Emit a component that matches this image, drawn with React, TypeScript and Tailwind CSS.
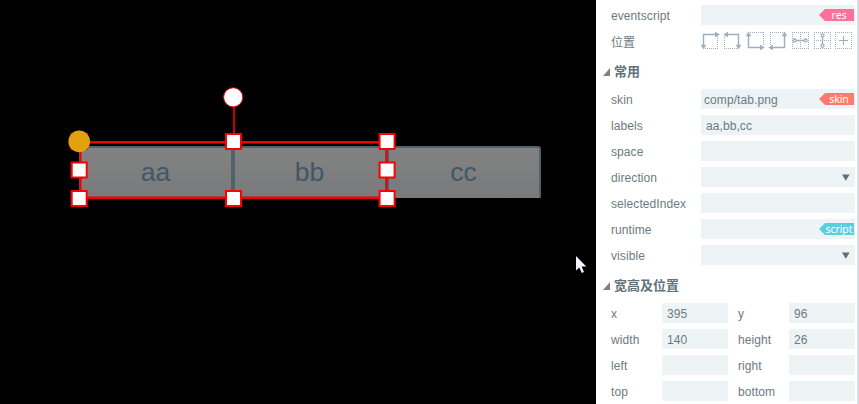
import React from "react";

const FONT = "font-['Liberation_Sans','Noto_Sans_CJK_SC',sans-serif]";

function Tag({ text, color }: { text: string; color: string }) {
  return (
    <span className="relative mr-px ml-auto flex h-3 w-[35px] items-center">
      <svg className="absolute inset-0" width="35" height="12" viewBox="0 0 35 12">
        <path d="M0 6 L6 0 H35 V12 H6 Z" fill={color} />
      </svg>
      <span className="relative w-full pl-[5px] text-center font-['Noto_Sans',sans-serif] text-[10.5px] leading-3 tracking-[-0.1px] text-white">
        {text}
      </span>
    </span>
  );
}

function Caret() {
  return (
    <svg className="mr-[5px] ml-auto" width="8" height="7" viewBox="0 0 8 7">
      <path d="M0 0.5 H7.6 L3.8 6.8 Z" fill="#5f7078" />
    </svg>
  );
}

function Row({ label, children }: { label: string; children?: React.ReactNode }) {
  return (
    <div className="flex h-[26px] items-center pl-[15px]">
      <span className="w-[90px] shrink-0 pt-px">{label}</span>
      <div className="flex h-5 w-[154px] items-center bg-[#eef3f6]">{children}</div>
    </div>
  );
}

function Header({ text }: { text: string }) {
  return (
    <div className="flex h-8 items-center pt-1 pl-[7px] text-[13px] font-bold tracking-normal text-[#62737c]">
      <svg className="mr-1" width="7" height="8" viewBox="0 0 7 8">
        <path d="M7 0 V8 H0 Z" fill="#808080" />
      </svg>
      <span className="leading-5">{text}</span>
    </div>
  );
}

function Pair({ a, av, b, bv }: { a: string; av?: string; b: string; bv?: string }) {
  return (
    <div className="flex h-[26px] items-center pl-[15px]">
      <span className="w-[51px] pt-px">{a}</span>
      <div className="flex h-5 w-[66px] items-center bg-[#eef3f6] pt-px pl-[5px]">{av}</div>
      <span className="ml-[10px] w-[51px] pt-px">{b}</span>
      <div className="flex h-5 w-[66px] items-center bg-[#eef3f6] pt-px pl-[5px]">{bv}</div>
    </div>
  );
}

function AlignIcons() {
  return (
    <svg width="154" height="20" viewBox="701 30 154 20" fill="none" stroke="#9dafba" shapeRendering="crispEdges">
      <g strokeDasharray="1 1">
        <path d="M717.5 35 V48 M705 47.5 H718" />
        <path d="M724.5 35 V48 M724 47.5 H737" />
        <path d="M750 31.5 H764 M763.5 31 V45" />
        <path d="M770 31.5 H783 M770.5 31 V45" />
        <path d="M792 31.5 H809 M792 47.5 H809 M792.5 31 V48 M808.5 31 V48 M800.5 31 V48" />
        <path d="M814 31.5 H831 M814 47.5 H831 M814.5 31 V48 M830.5 31 V48 M814 39.5 H831" />
        <path d="M835 31.5 H852 M835 47.5 H852 M835.5 31 V48 M851.5 31 V48" />
      </g>
      <g shapeRendering="auto" strokeWidth="1.4">
        <path d="M703.5 45 V33.5 H716 M727 33.5 H738.5 V45 M748.5 34 V46.5 H761 M772 46.5 H784.5 V34" />
        <path d="M796 39.5 H805 M822.5 35 V44" />
      </g>
      <path d="M839 39.5 H848 M843.5 35 V44" />
      <g fill="#9dafba" stroke="none" shapeRendering="auto">
        <path d="M715 30.8 L719.8 33.5 L715 36.2 Z M700.8 43.8 H706.2 L703.5 48.6 Z" />
        <path d="M728 30.8 L723.2 33.5 L728 36.2 Z M735.8 43.8 H741.2 L738.5 48.6 Z" />
        <path d="M745.8 35.3 H751.2 L748.5 30.5 Z M760 43.8 L764.8 46.5 L760 49.2 Z" />
        <path d="M773 43.8 L768.2 46.5 L773 49.2 Z M781.8 35.3 H787.2 L784.5 30.5 Z" />
      </g>
      <g fill="white" strokeWidth="1.3" shapeRendering="auto">
        <circle cx="794.6" cy="39.5" r="1.5" />
        <circle cx="805.6" cy="39.5" r="1.5" />
        <circle cx="822.5" cy="34.3" r="1.5" />
        <circle cx="822.5" cy="44.8" r="1.5" />
      </g>
    </svg>
  );
}

const handles: [number, number][] = [
  [79.2, 141.5],
  [233.5, 141.5],
  [387.1, 141.5],
  [79.2, 170],
  [387.1, 170],
  [79.2, 198.5],
  [233.5, 198.5],
  [387.1, 198.5],
];

export default function App() {
  return (
    <div className={`flex h-[404px] w-[859px] overflow-hidden bg-white text-xs tracking-[0.08px] text-[#6c7a82] ${FONT}`}>
      <main className="relative w-[596px] shrink-0 bg-black">
        <div className="absolute top-[146px] left-[79px] flex h-[52px] w-[462px] text-[26.5px] tracking-normal text-[#3f5869]">
          {["aa", "bb", "cc"].map((t) => (
            <div
              key={t}
              className="flex h-full w-[154px] items-center justify-center rounded-tr-[3px] border-x-2 border-t-2 border-[#4f626e] bg-linear-to-b from-[#828282] to-[#797a7b]"
            >
              <span className="pr-px pb-0.5 leading-none">{t}</span>
            </div>
          ))}
        </div>
        <svg className="absolute inset-0" width="596" height="404" viewBox="0 0 596 404">
          <path d="M234 105 V140" stroke="#cc0000" strokeWidth="2" />
          <path d="M80.5 142 V198 M386.5 142 V198" stroke="#f00000" strokeWidth="2" />
          <path d="M80 142.3 H387 M80 197.8 H387" stroke="#f00000" strokeWidth="2.4" />
          {handles.map(([x, y]) => (
            <rect key={`${x}-${y}`} x={x - 7.5} y={y - 7.5} width="15" height="15" fill="white" stroke="#ff0000" strokeWidth="2" />
          ))}
          <circle cx="233.2" cy="97.3" r="9.6" fill="white" stroke="#d50000" strokeWidth="1" />
          <circle cx="79.2" cy="141.4" r="10.8" fill="#e1a20e" />
          <path d="M576 256 V270.5 L579.3 267.4 L581.8 273 L584 272 L581.6 266.6 H586.3 Z" fill="#f4f6ff" />
        </svg>
      </main>
      <aside className="w-[261px] shrink-0 pt-[2px]">
        <Row label="eventscript">
          <Tag text="res" color="#fb7299" />
        </Row>
        <div className="flex h-[26px] items-center pl-[15px]">
          <span className="w-[90px] pt-[3px] tracking-normal">位置</span>
          <AlignIcons />
        </div>
        <Header text="常用" />
        <Row label="skin">
          <span className="pt-px pl-[3px]">comp/tab.png</span>
          <Tag text="skin" color="#fd7b6b" />
        </Row>
        <Row label="labels">
          <span className="pt-px pl-[5px]">aa,bb,cc</span>
        </Row>
        <Row label="space" />
        <Row label="direction">
          <Caret />
        </Row>
        <Row label="selectedIndex" />
        <Row label="runtime">
          <Tag text="script" color="#5bcede" />
        </Row>
        <Row label="visible">
          <Caret />
        </Row>
        <Header text="宽高及位置" />
        <Pair a="x" av="395" b="y" bv="96" />
        <Pair a="width" av="140" b="height" bv="26" />
        <Pair a="left" b="right" />
        <Pair a="top" b="bottom" />
      </aside>
      <div className="w-[2px] shrink-0 bg-[#d8dfe6]" />
    </div>
  );
}
